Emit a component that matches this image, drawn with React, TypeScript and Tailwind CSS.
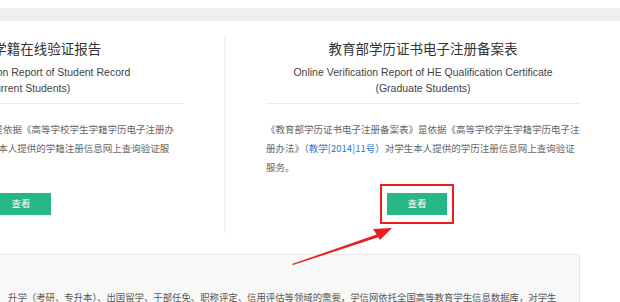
import React from 'react';

const cjk = "font-['Noto_Sans_CJK_SC',sans-serif]";

type ColProps = {
  title: string;
  en1: string;
  en2: string;
  lines: React.ReactNode[];
  divider?: boolean;
  marked?: boolean;
};

const Column = ({ title, en1, en2, lines, divider, marked }: ColProps) => (
  <div
    className={`w-[396px] shrink-0 px-[40px] pt-[2px] pb-[18px] ${
      divider ? 'border-l-2 border-[#f3f3f3]' : 'border-l-2 border-transparent'
    }`}
  >
    <h2 className={`${cjk} text-center text-[13.5px] leading-[18px] text-[#333]`}>{title}</h2>
    <div className="mt-[7px] text-center font-['Liberation_Sans',sans-serif] text-[10.5px] leading-[16px] text-[#444]">
      <p>{en1}</p>
      <p>{en2}</p>
    </div>
    <div className="mt-[7px] border-t border-[#e6eded]" />
    <div className={`${cjk} mt-[16px] text-[9.5px] leading-[19px] text-[#666] whitespace-nowrap`}>
      {lines.map((l, i) => (
        <p key={i}>{l}</p>
      ))}
    </div>
    <div className="mt-[15.5px] ml-[121px]">
      <div className="relative w-[60px]">
        <button className={`${cjk} flex h-[22px] w-[60px] items-center justify-center bg-[#25b787] text-[9.5px] text-white`}>
          查看
        </button>
        {/* 红框标注 */}
        {marked && (
          <span className="pointer-events-none absolute -left-[7px] -right-[7px] -top-[9px] -bottom-[9px] border-2 border-[#ee1d1d]" />
        )}
      </div>
    </div>
  </div>
);

const App = () => {
  return (
    <div className="relative h-[302px] w-[620px] overflow-hidden bg-white">
      <div className="mt-[8px] h-[13px] bg-[#efefef]" />

      <div className="-ml-[172px] w-[792px]">
        {/* 两栏 */}
        <div className="flex pt-[16px]">
          <Column
            title="教育部学籍在线验证报告"
            en1="Online Verification Report of Student Record"
            en2="(Current Students)"
            lines={[
              '《教育部学籍在线验证报告》是依据《高等学校学生学籍学历电子注册办',
              <>
                法》（<span className="text-[#2a79d0]">教学[2014]11号</span>）对学生本人提供的学籍注册信息网上查询验证服
              </>,
              '务。',
            ]}
          />
          <Column
            divider
            marked
            title="教育部学历证书电子注册备案表"
            en1="Online Verification Report of HE Qualification Certificate"
            en2="(Graduate Students)"
            lines={[
              '《教育部学历证书电子注册备案表》是依据《高等学校学生学籍学历电子注',
              <>
                册办法》（<span className="text-[#2a79d0]">教学[2014]11号</span>）对学生本人提供的学历注册信息网上查询验证
              </>,
              '服务。',
            ]}
          />
        </div>

        {/* 说明区域 */}
        <div className="mt-[21px] mr-[40px] h-[80px] border-t border-r border-[#e8e8e8] bg-[#f8f8f8] pt-[33px] pl-[180px]">
          <p className={`${cjk} text-[9.4px] leading-[19px] text-[#555] whitespace-nowrap`}>
            升学（考研、专升本）、出国留学、干部任免、职称评定、信用评估等领域的需要，学信网依托全国高等教育学生信息数据库，对学生
          </p>
        </div>
      </div>

      {/* 箭头标注 */}
      <svg className="absolute left-[285px] top-[220px]" width="115" height="50" viewBox="0 0 115 50">
        <polygon points="7,44 96,13 94,17 8,45" fill="#ee1d1d" />
        <polygon points="107,8 88,9 95,20" fill="#ee1d1d" />
      </svg>
    </div>
  );
};

export default App;
